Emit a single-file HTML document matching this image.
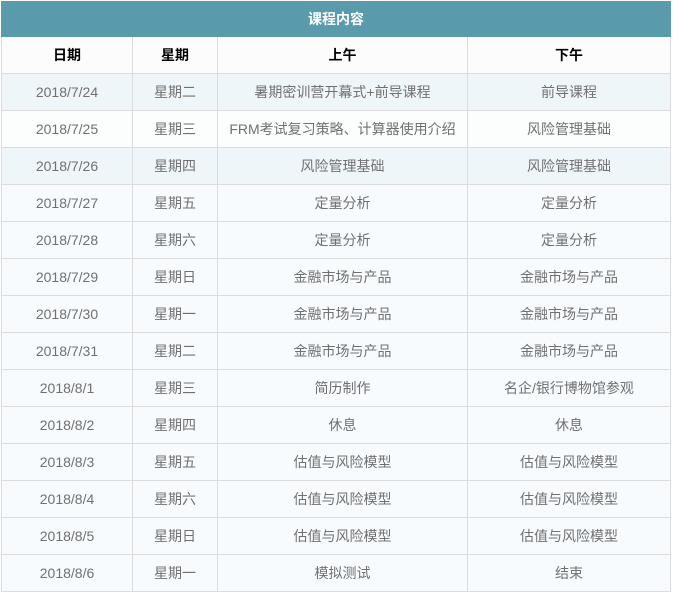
<!DOCTYPE html>
<html><head><meta charset="utf-8">
<style>
body{margin:0;background:#fff;font-family:"Liberation Sans","Noto Sans CJK SC",sans-serif;}
table{position:absolute;left:1px;top:1px;border-collapse:collapse;table-layout:fixed;width:670px;}
td,th{border:1px solid #dcdcdc;text-align:center;font-size:14px;color:#707070;height:36px;padding:0;font-weight:normal;}
th{color:#000;font-weight:bold;background:#fcfcfc;}
.t{background:#5a9bab;color:#fff;font-weight:bold;border-color:#5a9bab;height:34px;}
tr.a td{background:#eff6f9;}
tr.b td{background:#fcfdfd;}
tr.c td{background:#f7fbfe;}
</style></head><body>
<table>
<colgroup><col style="width:131px"><col style="width:85px"><col style="width:250px"><col style="width:203px"></colgroup>
<tr><th class="t" colspan="4">课程内容</th></tr>
<tr><th>日期</th><th>星期</th><th>上午</th><th>下午</th></tr>
<tr class="a"><td>2018/7/24</td><td>星期二</td><td>暑期密训营开幕式+前导课程</td><td>前导课程</td></tr>
<tr class="b"><td>2018/7/25</td><td>星期三</td><td>FRM考试复习策略、计算器使用介绍</td><td>风险管理基础</td></tr>
<tr class="a"><td>2018/7/26</td><td>星期四</td><td>风险管理基础</td><td>风险管理基础</td></tr>
<tr class="c"><td>2018/7/27</td><td>星期五</td><td>定量分析</td><td>定量分析</td></tr>
<tr class="c"><td>2018/7/28</td><td>星期六</td><td>定量分析</td><td>定量分析</td></tr>
<tr class="c"><td>2018/7/29</td><td>星期日</td><td>金融市场与产品</td><td>金融市场与产品</td></tr>
<tr class="c"><td>2018/7/30</td><td>星期一</td><td>金融市场与产品</td><td>金融市场与产品</td></tr>
<tr class="c"><td>2018/7/31</td><td>星期二</td><td>金融市场与产品</td><td>金融市场与产品</td></tr>
<tr class="c"><td>2018/8/1</td><td>星期三</td><td>简历制作</td><td>名企/银行博物馆参观</td></tr>
<tr class="c"><td>2018/8/2</td><td>星期四</td><td>休息</td><td>休息</td></tr>
<tr class="c"><td>2018/8/3</td><td>星期五</td><td>估值与风险模型</td><td>估值与风险模型</td></tr>
<tr class="c"><td>2018/8/4</td><td>星期六</td><td>估值与风险模型</td><td>估值与风险模型</td></tr>
<tr class="c"><td>2018/8/5</td><td>星期日</td><td>估值与风险模型</td><td>估值与风险模型</td></tr>
<tr class="c"><td>2018/8/6</td><td>星期一</td><td>模拟测试</td><td>结束</td></tr>
</table>
</body></html>
